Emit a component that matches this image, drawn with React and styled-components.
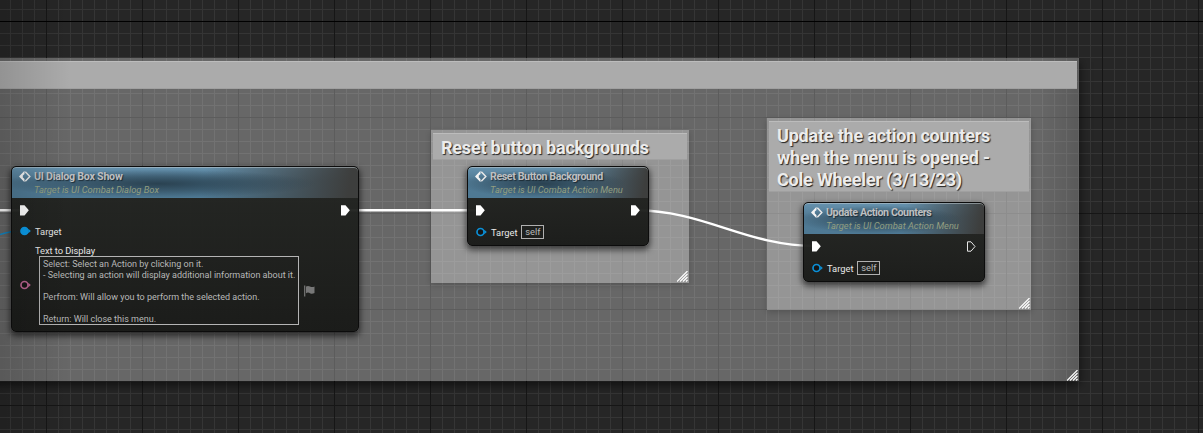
import React from "react";
import styled, { createGlobalStyle, css } from "styled-components";

const Global = createGlobalStyle`
  body { margin: 0; background: #262626; font-family: Roboto, "Liberation Sans", sans-serif; }
`;

const Canvas = styled.main`
  position: relative;
  width: 1203px;
  height: 433px;
  overflow: hidden;
  background-color: #262626;
  background-image:
    linear-gradient(#000 1px, transparent 1px),
    linear-gradient(#161616 1px, transparent 1px),
    linear-gradient(90deg, #161616 1px, transparent 1px),
    linear-gradient(#353535 1px, transparent 1px),
    linear-gradient(90deg, #353535 1px, transparent 1px);
  background-size: 100% 768px, 100% 96px, 96px 100%, 100% 12px, 12px 100%;
  background-position: 0 21px, 0 21px, 46px 0, 0 9px, 10px 0;
`;

const Vignette = styled.div`
  position: absolute;
  inset: 0;
  pointer-events: none;
  background: linear-gradient(90deg, rgba(0, 0, 0, 0.14), transparent 70px);
`;

const Comment = styled.section`
  position: absolute;
  left: ${(p) => p.$x}px;
  top: ${(p) => p.$y}px;
  width: ${(p) => p.$w}px;
  height: ${(p) => p.$h}px;
  box-sizing: border-box;
  padding: 3px 2px;
  background: rgba(255, 255, 255, 0.3);
  ${(p) =>
    p.$outer
      ? css`
          background: linear-gradient(90deg, transparent calc(100% - 40px), rgba(0, 0, 0, 0.13)), rgba(255, 255, 255, 0.3);
          box-shadow: 0 4px 10px rgba(0, 0, 0, 0.6);
          clip-path: inset(0 -20px -20px 0);
        `
      : css`
          box-shadow: 0 2px 6px rgba(0, 0, 0, 0.2);
        `}
`;

const CommentTitle = styled.h2`
  box-sizing: border-box;
  height: ${(p) => p.$h}px;
  margin: 0;
  padding: 3px 8px 0;
  background: #ababab;
  border-top: 1px solid #bcbcbc;
  border-bottom: 1px solid #a0a0a0;
  color: #ececec;
  font-size: 18px;
  font-weight: 700;
  letter-spacing: -0.2px;
  line-height: 22px;
  white-space: pre;
  text-shadow: 1px 1px 1px #222;
`;

const Grip = styled.svg`
  position: absolute;
  right: 1px;
  bottom: ${(p) => p.$bottom}px;
`;

const NodeBox = styled.article`
  position: absolute;
  left: ${(p) => p.$x}px;
  top: ${(p) => p.$y}px;
  width: ${(p) => p.$w}px;
  height: ${(p) => p.$h}px;
  box-sizing: border-box;
  border: 1px solid #0c0c0c;
  border-radius: 5px;
  overflow: hidden;
  background: linear-gradient(rgba(35, 37, 34, 0.96), rgba(24, 25, 23, 0.96));
`;

const NodeShadow = styled(NodeBox)`
  overflow: visible;
  background: none;
  border-color: transparent;
  box-shadow: 0 3px 6px 1px rgba(0, 0, 0, 0.6);
`;

const NodeHeader = styled.header`
  display: flex;
  height: 31px;
  box-sizing: border-box;
  padding: 3px 0 0 7px;
  gap: 3px;
  border-radius: 4px 4px 0 0;
  box-shadow: inset 0 1px 0 rgba(190, 200, 205, 0.55);
  background:
    radial-gradient(ellipse 46% 46% at 42% 54%, rgba(38, 60, 74, 0.9), rgba(38, 60, 74, 0.5) 50%, transparent),
    linear-gradient(100deg, transparent 55%, rgba(62, 63, 62, 0.75) 86%, #3d3e3d 97%),
    linear-gradient(#6692ae, #507993 45%, #4e7994);
`;

const NodeTitle = styled.div`
  color: #bebfc0;
  font-size: 10.67px;
  font-weight: 700;
  letter-spacing: ${(p) => p.$tracking}px;
  line-height: 13px;
  white-space: nowrap;
  text-shadow: 1px 1px 1px rgba(0, 0, 0, 0.5);
`;

const NodeSubtitle = styled.div`
  color: #929e80;
  font-size: 9.33px;
  font-style: italic;
  line-height: 13px;
  white-space: nowrap;
`;

const ExecRow = styled.div`
  display: flex;
  justify-content: space-between;
  align-items: center;
  height: 24px;
  padding: 0 8px 0 7px;
`;

const PinRow = styled.div`
  display: flex;
  align-items: center;
  height: ${(p) => p.$h || 20}px;
  padding-left: 8px;
  color: #e8e8e8;
  font-size: 9.33px;
`;

const PinLabel = styled.span`
  margin-left: 4px;
  white-space: nowrap;
`;

const SelfTag = styled.span`
  box-sizing: border-box;
  width: 23px;
  height: 14px;
  margin-left: 4px;
  border: 1px solid #b0b0b0;
  color: #b8b8b8;
  line-height: 12px;
  text-align: center;
`;

const TextPinRow = styled.div`
  display: flex;
  align-items: center;
  padding: 5px 0 0 8px;
`;

const TextColumn = styled.div`
  margin-left: 4px;
  color: #e8e8e8;
  font-size: 9.33px;
  letter-spacing: -0.05px;
  line-height: 11px;
`;

const TextValue = styled.div`
  box-sizing: border-box;
  width: 260px;
  height: 69px;
  margin-left: 4px;
  padding: 2px 0 0 3px;
  border: 1px solid #b4b4b4;
  color: #b8b8b8;
  font-size: 9px;
  letter-spacing: 0;
  line-height: 11px;
  white-space: pre;
`;

const Wires = styled.svg`
  position: absolute;
  inset: 0;
`;

const FlagIcon = styled.svg`
  margin: 12px 0 0 5px;
`;

const FunctionIcon = () => (
  <svg width="12" height="13" viewBox="0 0 12 13">
    <path d="M5.500 .8V4L3.800 5.500V7.500L5.500 9V12.200L0 6.500Z" fill="#f4f4f4" />
    <path d="M6.300 1.800 10.800 6.500 6.300 11.200" fill="none" stroke="#e8e8e8" strokeWidth="1.500" />
  </svg>
);

const ExecPin = ({ hollow }) => (
  <svg width="10" height="11" viewBox="0 0 10 11">
    <path
      d={hollow ? "M1.500 .8H5L9 5.500 5 10.200H1.500Z" : "M1 .3H5.500L9.800 5.300 5.500 10.500H1Z"}
      fill={hollow ? "none" : "#fff"}
      stroke={hollow ? "#e6e6e6" : "none"}
    />
  </svg>
);

const DataPin = ({ color, filled }) => (
  <svg width="11" height="10" viewBox="0 0 11 10">
    <circle cx="4.500" cy="5" r="3.500" fill={filled ? color : "#151515"} stroke={color} strokeWidth="1.700" />
    <path d="M8.300 2.700 10.800 5 8.300 7.300Z" fill={color} />
  </svg>
);

const ResizeGrip = ({ bottom = 1 }) => (
  <Grip $bottom={bottom} width="11" height="11" viewBox="0 0 11 11">
    <path d="M0 10.500 10.500 0M3 10.500 10.500 3M6 10.500 10.500 6M9 10.500 10.500 9" stroke="#fff" strokeWidth="1.200" />
  </Grip>
);

const Node = ({ x, y, w, h, title, tracking = -0.4, subtitle, openExec, children }) => (
  <>
    <NodeShadow $x={x} $y={y} $w={w} $h={h} />
    <NodeBox $x={x} $y={y} $w={w} $h={h}>
      <NodeHeader>
        <FunctionIcon />
        <div>
          <NodeTitle $tracking={tracking}>{title}</NodeTitle>
          <NodeSubtitle>{subtitle}</NodeSubtitle>
        </div>
      </NodeHeader>
      <ExecRow>
        <ExecPin />
        <ExecPin hollow={openExec} />
      </ExecRow>
      {children}
    </NodeBox>
  </>
);

const SelfPin = () => (
  <PinRow>
    <DataPin color="#0b8fd6" />
    <PinLabel>Target</PinLabel>
    <SelfTag>self</SelfTag>
  </PinRow>
);

const DIALOG_TEXT = `Select: Select an Action by clicking on it.
- Selecting an action will display additional information about it.

Perfrom: Will allow you to perform the selected action.

Return: Will close this menu.`;

export default function App() {
  return (
    <Canvas>
      <Global />
      <Comment $outer $x={-20} $y={58} $w={1099} $h={323}>
        <CommentTitle $h={28} />
        <ResizeGrip bottom={0} />
      </Comment>
      <Comment $x={431} $y={130} $w={258} $h={153}>
        <CommentTitle $h={27}>Reset button backgrounds</CommentTitle>
        <ResizeGrip />
      </Comment>
      <Comment $x={767} $y={118} $w={264} $h={192}>
        <CommentTitle $h={71}>{"Update the action counters\nwhen the menu is opened -\nCole Wheeler (3/13/23)"}</CommentTitle>
        <ResizeGrip />
      </Comment>
      <Wires width="1203" height="433" fill="none">
        <path d="M0 210.300H20M345 210.300H480" stroke="#fff" strokeWidth="2.400" />
        <path d="M635 210.300C705 210.300 745 246 816 246" stroke="#fff" strokeWidth="2.400" />
        <path d="M0 234.500Q10 231 24 231" stroke="#1189c8" strokeWidth="1.500" />
      </Wires>
      <Node x={11} y={166} w={348} h={166} title="UI Dialog Box Show" tracking={-0.25} subtitle="Target is UI Combat Dialog Box">
        <PinRow $h={18}>
          <DataPin color="#0b9be8" filled />
          <PinLabel>Target</PinLabel>
        </PinRow>
        <TextPinRow>
          <DataPin color="#b8638f" />
          <TextColumn>
            Text to Display
            <TextValue>{DIALOG_TEXT}</TextValue>
          </TextColumn>
          <FlagIcon width="12" height="12" viewBox="0 0 12 12">
            <path d="M.7 .5V11.500" stroke="#777" strokeWidth="1.200" />
            <path d="M2 1.500Q4 .3 6 1.500T10.500 1.500V8Q8 9.500 6 8.200T2 8.200Z" fill="#777" />
          </FlagIcon>
        </TextPinRow>
      </Node>
      <Node x={467} y={166} w={182} h={80} title="Reset Button Background" subtitle="Target is UI Combat Action Menu">
        <SelfPin />
      </Node>
      <Node x={803} y={202} w={182} h={80} title="Update Action Counters" subtitle="Target is UI Combat Action Menu" openExec>
        <SelfPin />
      </Node>
      <Vignette />
    </Canvas>
  );
}
